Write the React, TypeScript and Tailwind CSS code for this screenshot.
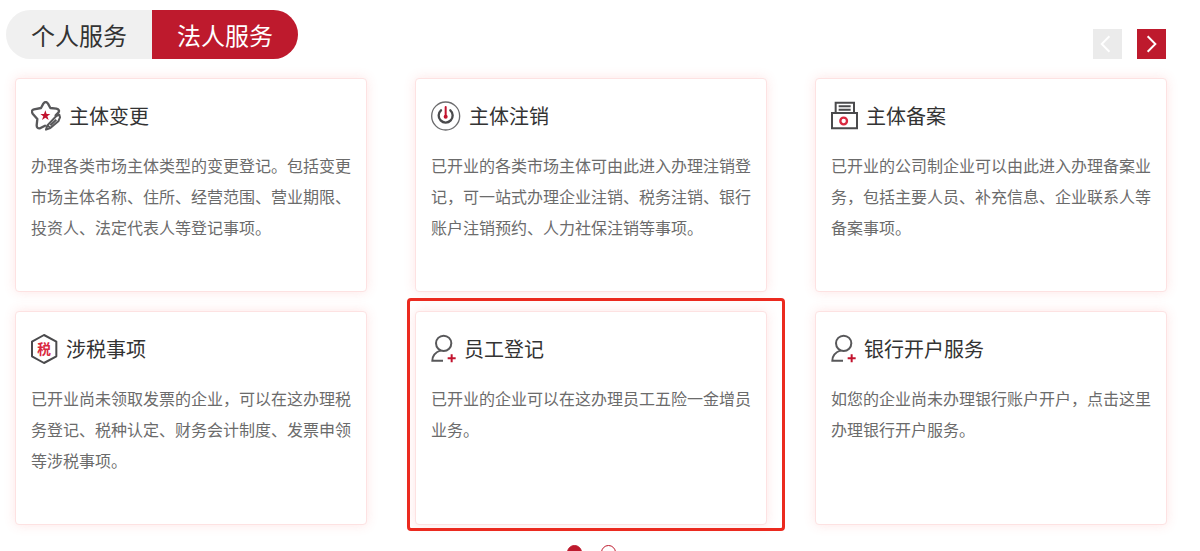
import { useState, type ReactNode } from "react"
import clsx from "clsx"

function StarIcon() {
  return (
    <svg viewBox="33 33 90 90" className="h-[30px] w-[30px] shrink-0" fill="none" aria-hidden="true">
      <path
        d="M70 41Q77 31 84 41L91 54L109 56Q121 59 115 68L107 76M75 107L60 115Q50 116 50 106L52 87L38 71Q32 61 42 58L63 54L70 41"
        stroke="#58585a"
        strokeWidth="7"
        strokeLinecap="round"
        strokeLinejoin="round"
      />
      <path d="M109 78L118 74L120 82L115 94L91 114L78 119L82 106ZM82 106L91 114M91 106L109 89" stroke="#58585a" strokeWidth="6" strokeLinejoin="round" />
      <path d="M76 61L80 72H91L82 79L86 90L76 83L66 90L70 79L61 72H72Z" fill="#c2132e" />
    </svg>
  )
}

function PowerIcon() {
  return (
    <svg viewBox="33 33 90 90" className="h-[30px] w-[30px] shrink-0" fill="none" aria-hidden="true">
      <circle cx="77" cy="78" r="42" stroke="#6c6c6e" strokeWidth="4" />
      <path d="M63 61A21 21 0 1 0 91 61" stroke="#4a4a4c" strokeWidth="7" strokeLinecap="round" />
      <path d="M77 51V80" stroke="#c2132e" strokeWidth="6" strokeLinecap="round" />
      <circle cx="77" cy="80" r="6" fill="#c2132e" />
    </svg>
  )
}

function PrinterIcon() {
  return (
    <svg viewBox="33 33 81 90" className="h-[30px] w-[27px] shrink-0" fill="none" aria-hidden="true">
      <path d="M47 69V38H102V69M56 49H92M56 59H92" stroke="#4a4a4c" strokeWidth="6" />
      <path d="M36 69H111V115H36Z" stroke="#4a4a4c" strokeWidth="6" />
      <circle cx="71" cy="93" r="10" stroke="#d9283f" strokeWidth="7" />
    </svg>
  )
}

function TaxIcon() {
  return (
    <svg viewBox="33 28 81 90" className="h-[30px] w-[27px] shrink-0" fill="none" aria-hidden="true">
      <path d="M72 31L109 51V95L72 115L36 95V51Z" stroke="#4a4a4c" strokeWidth="6" strokeLinejoin="round" />
      <text x="72" y="88" textAnchor="middle" fontSize="41" fontWeight="700" fill="#d9283f">
        税
      </text>
    </svg>
  )
}

function UserPlusIcon() {
  return (
    <svg viewBox="33 28 75 90" className="h-[30px] w-[25px] shrink-0" fill="none" aria-hidden="true">
      <circle cx="71" cy="56" r="23" stroke="#58585a" strokeWidth="6" />
      <path d="M62 77Q37 86 37 108H69" stroke="#58585a" strokeWidth="6" />
      <path d="M95 89V113M83 101H107" stroke="#c2132e" strokeWidth="6" />
    </svg>
  )
}

type Service = {
  title: string
  icon: ReactNode
  text: string
  highlighted?: boolean
}

const services: Service[] = [
  {
    title: "主体变更",
    icon: <StarIcon />,
    text: "办理各类市场主体类型的变更登记。包括变更市场主体名称、住所、经营范围、营业期限、投资人、法定代表人等登记事项。",
  },
  {
    title: "主体注销",
    icon: <PowerIcon />,
    text: "已开业的各类市场主体可由此进入办理注销登记，可一站式办理企业注销、税务注销、银行账户注销预约、人力社保注销等事项。",
  },
  {
    title: "主体备案",
    icon: <PrinterIcon />,
    text: "已开业的公司制企业可以由此进入办理备案业务，包括主要人员、补充信息、企业联系人等备案事项。",
  },
  {
    title: "涉税事项",
    icon: <TaxIcon />,
    text: "已开业尚未领取发票的企业，可以在这办理税务登记、税种认定、财务会计制度、发票申领等涉税事项。",
  },
  {
    title: "员工登记",
    icon: <UserPlusIcon />,
    text: "已开业的企业可以在这办理员工五险一金增员业务。",
    highlighted: true,
  },
  {
    title: "银行开户服务",
    icon: <UserPlusIcon />,
    text: "如您的企业尚未办理银行账户开户，点击这里办理银行开户服务。",
  },
]

const tabs = ["个人服务", "法人服务"]

function ServiceCard({ title, icon, text, highlighted }: Service) {
  return (
    <article className="relative min-h-[214px] rounded border border-[#fde2e2] bg-white px-[15px] pt-[22px] pb-4 shadow-[0_0_12px_rgba(250,80,80,0.15)]">
      <div className="flex h-[30px] items-center gap-2">
        {icon}
        <h3 className="text-xl text-[#333]">{title}</h3>
      </div>
      <p className="mt-[19px] text-base leading-[31px] text-[#6b6b6b]">{text}</p>
      {highlighted && (
        <div className="pointer-events-none absolute -top-3.5 -right-[19px] -bottom-[7px] -left-[9px] z-10 rounded border-3 border-[#eb2a1f]" />
      )}
    </article>
  )
}

export default function App() {
  const [tab, setTab] = useState(1)
  const [page, setPage] = useState(0)

  return (
    <main className="h-screen overflow-hidden bg-white pt-2.5 font-['Noto_Sans_CJK_SC',sans-serif]">
      <div className="flex items-end justify-between pr-[34px] pl-1.5">
        <div className="flex overflow-hidden rounded-full">
          {tabs.map((name, i) => (
            <button
              key={name}
              type="button"
              onClick={() => setTab(i)}
              className={clsx(
                "h-[49px] px-[25px] text-2xl",
                tab === i ? "bg-[#be1a2d] text-white" : "bg-[#f0f0f0] text-[#333]"
              )}
            >
              {name}
            </button>
          ))}
        </div>
        <div className="flex gap-[15px]">
          <button
            type="button"
            aria-label="上一页"
            onClick={() => setPage(0)}
            className={clsx("flex h-[30px] w-[29px] items-center justify-center", page === 0 ? "bg-[#ebebeb]" : "bg-[#be1a2d]")}
          >
            <svg viewBox="0 0 30 30" className="h-[30px] w-[29px]" fill="none" aria-hidden="true">
              <path d="M17 7L9 15L17 23" stroke="white" strokeWidth="2" />
            </svg>
          </button>
          <button
            type="button"
            aria-label="下一页"
            onClick={() => setPage(1)}
            className={clsx("flex h-[30px] w-[29px] items-center justify-center", page === 1 ? "bg-[#ebebeb]" : "bg-[#be1a2d]")}
          >
            <svg viewBox="0 0 30 30" className="h-[30px] w-[29px]" fill="none" aria-hidden="true">
              <path d="M11 7L19 15L11 23" stroke="white" strokeWidth="2" />
            </svg>
          </button>
        </div>
      </div>

      <div className="mt-[19px] pr-[33px] pl-[15px]">
        <div className="grid grid-cols-3 gap-x-12 gap-y-[19px]">
          {services.map((service) => (
            <ServiceCard key={service.title} {...service} />
          ))}
        </div>
        <div className="mt-5 flex justify-center gap-[19px]">
          {[0, 1].map((i) => (
            <button
              key={i}
              type="button"
              aria-label={`第${i + 1}页`}
              onClick={() => setPage(i)}
              className={clsx("h-[15px] w-[15px] rounded-full border border-[#be1a2d]", page === i ? "bg-[#be1a2d]" : "bg-white")}
            />
          ))}
        </div>
      </div>
    </main>
  )
}
